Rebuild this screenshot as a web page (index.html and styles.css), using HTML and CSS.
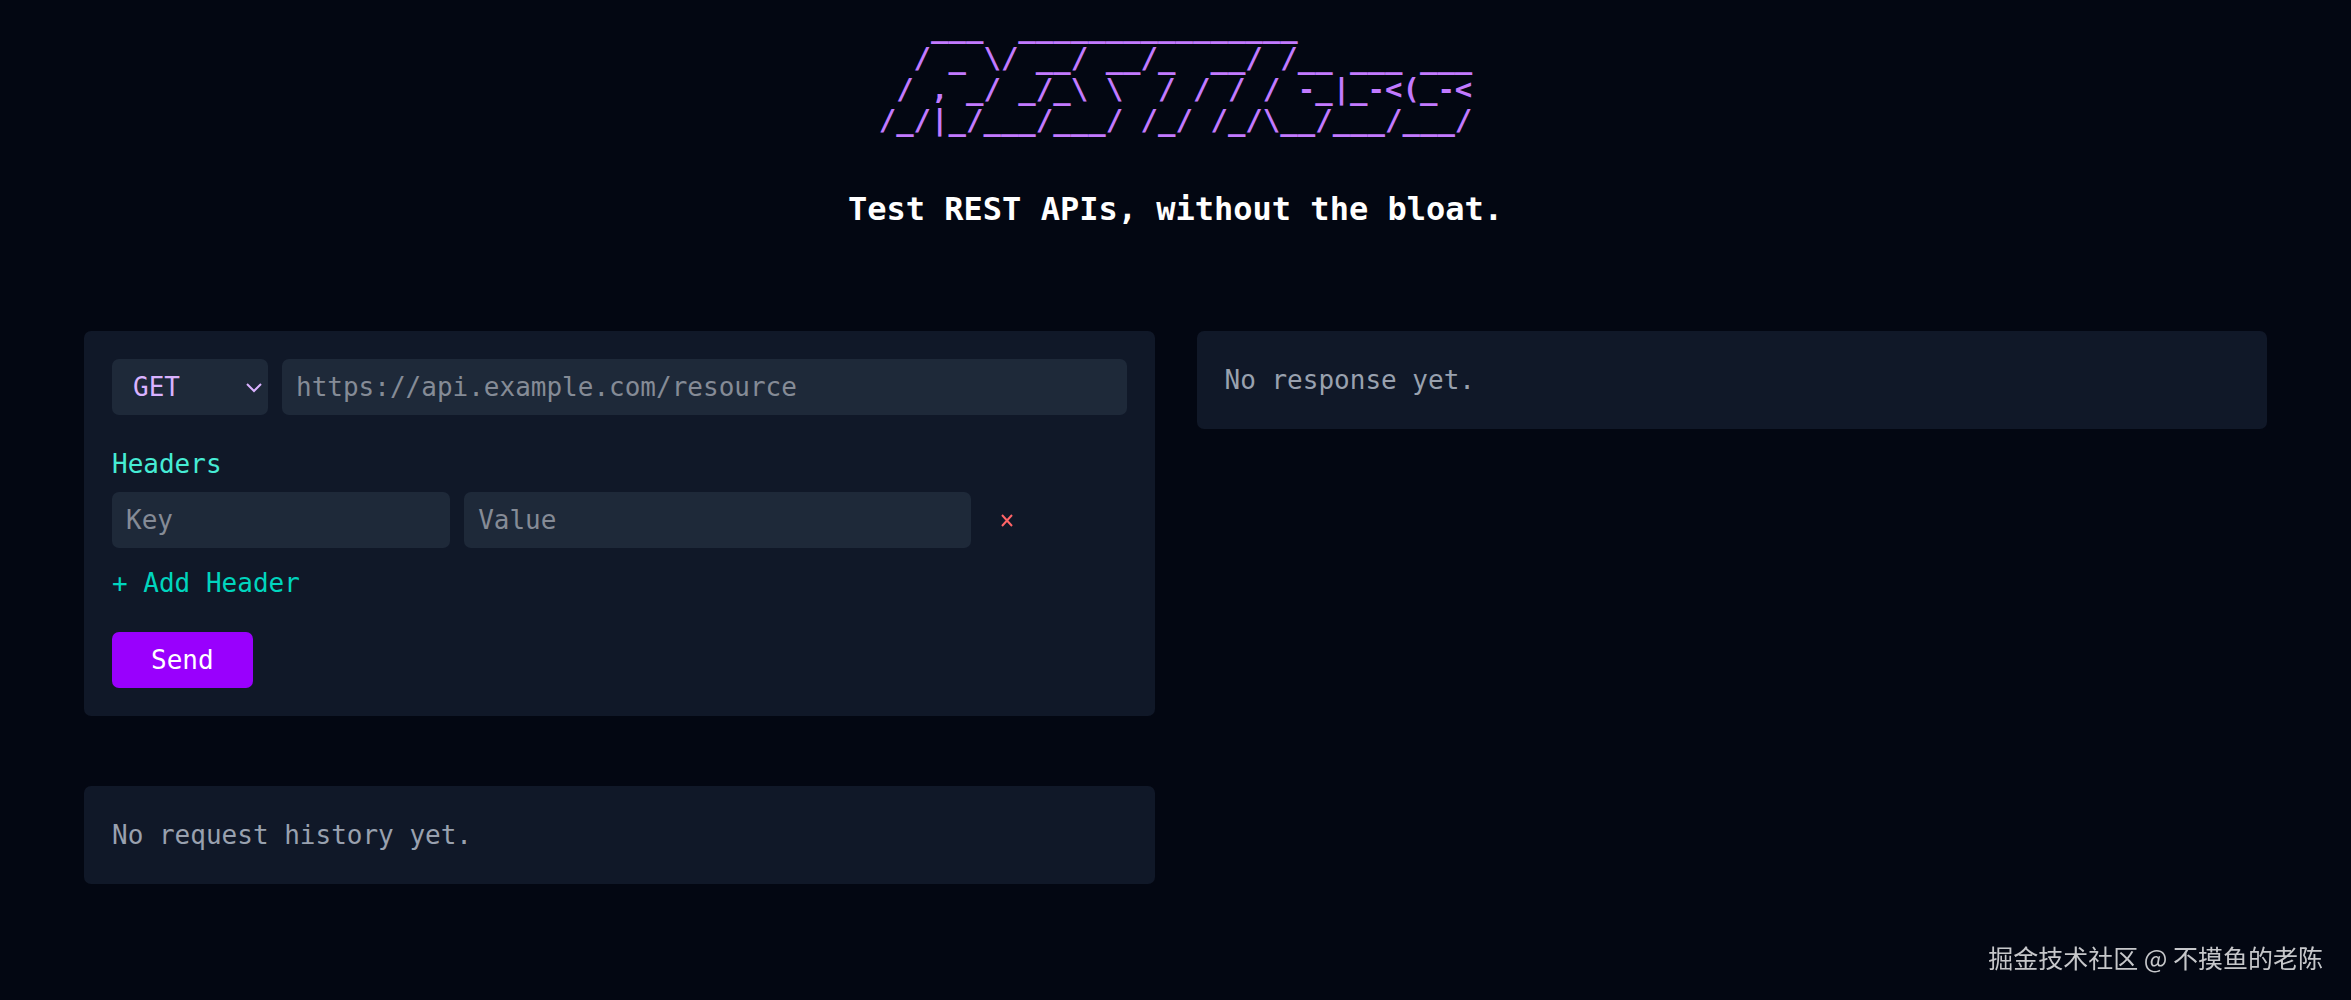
FILE: index.html
```html
<!DOCTYPE html>
<html lang="en">
<head>
    <meta charset="UTF-8">
    <meta name="viewport" content="width=device-width, initial-scale=1.0">
    <title>RESTless</title>
    <link rel="stylesheet" href="styles.css">
</head>
<body>
    <header class="header">
        <pre class="logo" role="img" aria-label="RESTless">   ___  ________________
  / _ \/ __/ __/_  __/ /__ ___ ___
 / , _/ _/_\ \  / / / / -_|_-&lt;(_-&lt;
/_/|_/___/___/ /_/ /_/\__/___/___/</pre>
        <h1>Test REST APIs, without the bloat.</h1>
    </header>

    <main class="container">
        <div class="column">
            <form class="panel request" id="requestForm">
                <div class="row">
                    <div class="method">
                        <select id="method" aria-label="Method">
                            <option>GET</option>
                            <option>POST</option>
                            <option>PUT</option>
                            <option>PATCH</option>
                            <option>DELETE</option>
                        </select>
                        <svg class="chevron" viewBox="0 0 16 10" aria-hidden="true">
                            <path d="M1 1l7 7 7-7"/>
                        </svg>
                    </div>
                    <input class="url" type="text" id="url" aria-label="URL" placeholder="https://api.example.com/resource">
                </div>

                <fieldset class="headers">
                    <legend>Headers</legend>
                    <div class="row">
                        <input class="key" type="text" aria-label="Header key" placeholder="Key">
                        <input class="value" type="text" aria-label="Header value" placeholder="Value">
                        <button class="remove" type="button" aria-label="Remove header">
                            <svg viewBox="0 0 12 14" aria-hidden="true">
                                <path d="M1 2l10 11M11 2L1 13"/>
                            </svg>
                        </button>
                    </div>
                    <button class="add" type="button">+ Add Header</button>
                </fieldset>

                <button class="send" type="submit">Send</button>
            </form>

            <section class="panel">
                <p>No request history yet.</p>
            </section>
        </div>

        <div class="column">
            <section class="panel">
                <p>No response yet.</p>
            </section>
        </div>
    </main>

    <footer class="credit" lang="zh">掘金技术社区 @ 不摸鱼的老陈</footer>
</body>
</html>
```
FILE: styles.css
```css
* {
    box-sizing: border-box;
}
body {
    font-family: 'DejaVu Sans Mono', monospace;
    font-size: 26px;
    line-height: 42px;
    background-color: #030712;
    color: #fff;
    margin: 0;
    min-height: 100vh;
}
input, select, button {
    font: inherit;
    border: none;
    border-radius: 7px;
}
.header {
    display: flex;
    flex-direction: column;
    align-items: center;
    padding-top: 12px;
}
.logo {
    font-family: inherit;
    font-size: 29px;
    font-weight: bold;
    line-height: 31px;
    color: #c27aff;
    margin: 0;
}
h1 {
    font-size: 32px;
    line-height: 49px;
    margin: 49px 0 0;
}
.container {
    display: grid;
    grid-template-columns: 1fr 1fr;
    gap: 42px;
    align-items: start;
    max-width: 2239px;
    margin: 97px auto 0;
    padding: 0 28px;
}
.column {
    display: flex;
    flex-direction: column;
    gap: 70px;
}
.panel {
    background-color: #101828;
    border-radius: 7px;
    padding: 28px;
}
.panel p {
    color: #99a1af;
    margin: 0;
}
.request {
    display: flex;
    flex-direction: column;
    align-items: flex-start;
    gap: 28px;
}
.row {
    display: flex;
    gap: 14px;
    width: 100%;
}
.method {
    position: relative;
    width: 156px;
}
.method select {
    appearance: none;
    width: 100%;
    height: 56px;
    padding: 0 21px;
    background-color: #1e2939;
    color: #dab2ff;
}
.chevron {
    position: absolute;
    right: 6px;
    top: 24px;
    width: 16px;
    height: 10px;
    fill: none;
    stroke: #dab2ff;
    stroke-width: 2;
    pointer-events: none;
}
input {
    height: 56px;
    min-width: 0;
    padding: 0 14px;
    background-color: #1e2939;
    color: #fff;
}
input::placeholder {
    color: #858b96;
    opacity: 1;
}
.url {
    flex: 1;
}
.headers {
    border: none;
    margin: 0;
    padding: 0;
    width: 100%;
}
.headers legend {
    padding: 0;
    margin-bottom: 7px;
    color: #46ecd5;
}
.key {
    width: 33.33%;
}
.value {
    width: 50%;
}
.remove {
    display: flex;
    align-items: center;
    padding: 0 16px;
    background: none;
}
.remove svg {
    width: 12px;
    height: 14px;
    fill: none;
    stroke: #ff6467;
    stroke-width: 2;
}
.add {
    display: block;
    margin-top: 14px;
    padding: 0;
    background: none;
    color: #00d5be;
}
.send {
    height: 56px;
    padding: 0 39px;
    background-color: #9900fd;
    color: #fff;
}
button {
    cursor: pointer;
}
.credit {
    position: fixed;
    right: 28px;
    bottom: 22px;
    font-family: 'Noto Sans CJK SC', sans-serif;
    font-size: 25px;
    color: #c6c7ca;
}
```
